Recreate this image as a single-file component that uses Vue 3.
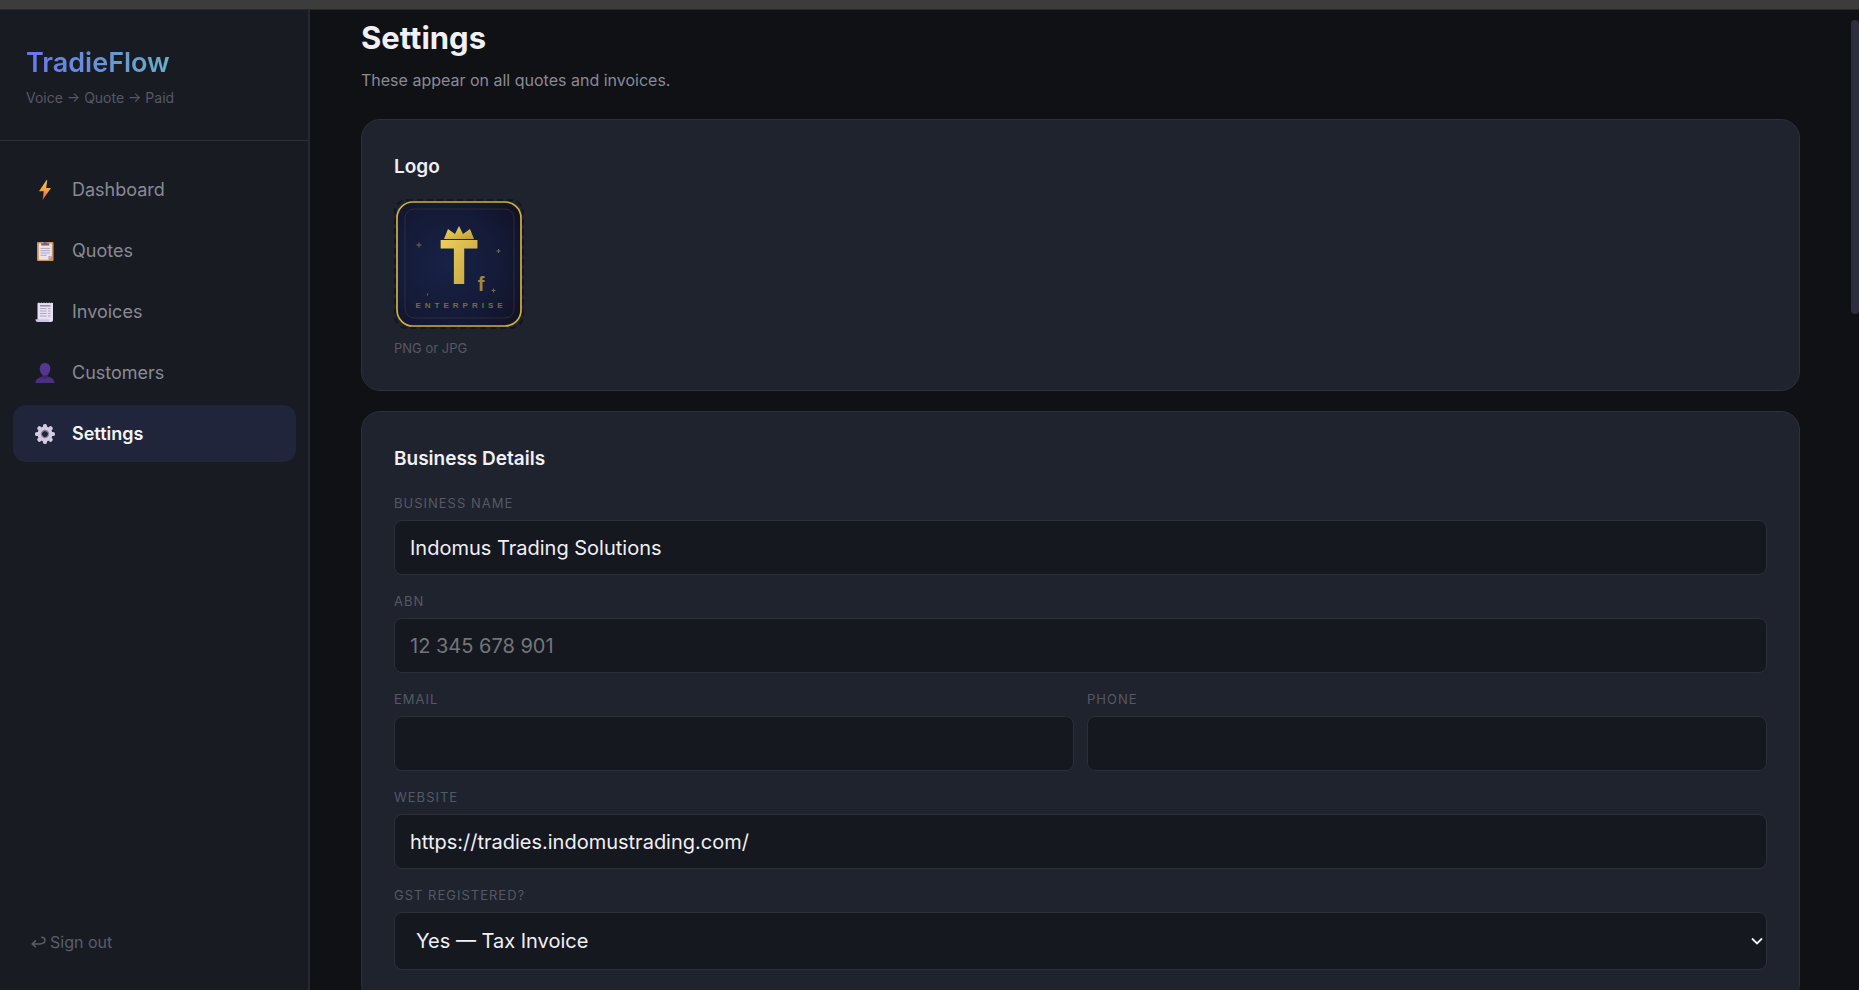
<template>
  <div class="app">
    <div class="window-strip"></div>
    <div class="shell">
      <aside class="sidebar">
        <div class="brand">
          <div class="brand-name">TradieFlow</div>
          <p class="brand-tag">Voice → Quote → Paid</p>
        </div>

        <nav class="nav">
          <a
            v-for="item in navItems"
            :key="item.id"
            :href="'#' + item.id"
            class="nav-item"
            :class="{ active: page === item.id }"
            @click.prevent="page = item.id"
          >
            <svg v-if="item.id === 'dashboard'" class="nav-icon" viewBox="0 0 20 20" aria-hidden="true">
              <defs>
                <linearGradient id="bolt" x1="0" y1="0" x2="0" y2="1">
                  <stop offset="0" stop-color="#fbc34e" />
                  <stop offset="0.55" stop-color="#f79a4b" />
                  <stop offset="1" stop-color="#e2485a" />
                </linearGradient>
              </defs>
              <path d="M11.6 0 4 11.200h4.800L7.600 20l8.400-12h-4.800L12.200 0Z" fill="url(#bolt)" />
            </svg>
            <svg v-else-if="item.id === 'quotes'" class="nav-icon" viewBox="0 0 20 20" aria-hidden="true">
              <rect x="2" y="1" width="16.500" height="19" rx="1" fill="#d0935a" />
              <path d="M3.800 2.500h13V15l-3.500 3.700H3.800Z" fill="#e9e4f3" />
              <path d="m16.800 15-3.500 3.700V15Z" fill="#b8a9cf" />
              <path d="M6.200 4.600V2.200h2.200a1.900 1.900 0 0 1 3.600 0h2.200v2.400Z" fill="#6d6480" />
              <path d="M5.500 7.400h9.500M5.500 9.700h9.500M5.500 12h9.500M5.500 14.300h6" stroke="#a79fb8" stroke-width="0.900" />
            </svg>
            <svg v-else-if="item.id === 'invoices'" class="nav-icon" viewBox="0 0 20 20" aria-hidden="true">
              <path d="M2.500 1.200 3.800.4l1.300.8 1.300-.8 1.300.8L9 .4l1.300.8 1.300-.8 1.300.8 1.300-.8 1.300.8 1.300-.8 1.200.8V18a2 2 0 0 1-2 2H5l-2.500-3Z" fill="#e6e0f0" />
              <path d="M.500 17.200H14c0 1.500.8 2.800 2.500 2.800H3a2.500 2.500 0 0 1-2.500-2.800Z" fill="#cfc5e4" />
              <path d="M5 3.800h10.500" stroke="#7d7492" stroke-width="1.200" />
              <path d="M5 6.500h6.500M5 9h6.500M5 11.500h6.500M5 14h6.500M13 6.500h2.500M13 9h2.500M13 11.500h2.500M13 14h2.500" stroke="#aba2bd" stroke-width="0.900" />
            </svg>
            <svg v-else-if="item.id === 'customers'" class="nav-icon" viewBox="0 0 20 20" aria-hidden="true">
              <path d="M.5 20c0-4 3.500-5.500 6.300-6.300h6.400c2.800.8 6.300 2.300 6.300 6.300Z" fill="#4a2f84" />
              <path d="M7.400 11h5.200v2.800a2.600 2 0 0 1-5.200 0Z" fill="#3d266f" />
              <path d="M10 0c3.300 0 5.200 2.200 5.200 5.600 0 4-2.200 7-5.200 7s-5.200-3-5.200-7C4.800 2.200 6.700 0 10 0Z" fill="#54388f" />
            </svg>
            <svg v-else class="nav-icon" viewBox="0 0 20 20" aria-hidden="true">
              <g fill="#d3cbe2">
                <rect v-for="n in 8" :key="n" x="7.900" y="0" width="4.200" height="6" rx="1.900" :transform="`rotate(${(n - 1) * 45} 10 10)`" />
              </g>
              <circle cx="10" cy="10" r="5.300" fill="none" stroke="#d3cbe2" stroke-width="4.400" />
              <circle cx="10" cy="10" r="3.600" fill="none" stroke="#8d839f" stroke-width="1.200" />
            </svg>
            <span>{{ item.label }}</span>
          </a>
        </nav>

        <button type="button" class="sign-out">
          <svg viewBox="0 0 14 12" aria-hidden="true">
            <path d="M9.500 1.200c2.300 0 3.500 1.100 3.500 2.700 0 2.200-2.200 3.400-5 3.400H1.500M4.500 4 1.200 7.300l3.300 3.200" />
          </svg>
          Sign out
        </button>
      </aside>

      <main class="content">
        <header class="page-head">
          <h1>Settings</h1>
          <p>These appear on all quotes and invoices.</p>
        </header>

        <section class="card">
          <h2>Logo</h2>
          <button type="button" class="logo-box" aria-label="Change logo">
            <svg viewBox="0 0 126 126" aria-hidden="true">
              <defs>
                <radialGradient id="night" cx="0.4" cy="0.5" r="0.750">
                  <stop offset="0" stop-color="#182246" />
                  <stop offset="0.6" stop-color="#141a36" />
                  <stop offset="1" stop-color="#101124" />
                </radialGradient>
                <linearGradient id="gold" x1="0" y1="0" x2="1" y2="1">
                  <stop offset="0" stop-color="#efd767" />
                  <stop offset="1" stop-color="#c29d35" />
                </linearGradient>
              </defs>
              <rect x="1" y="1" width="124" height="124" rx="16" fill="url(#night)" stroke="#cfae42" stroke-width="1.700" />
              <rect x="9" y="8" width="109" height="109" rx="9" fill="none" stroke="#34343c" stroke-width="0.800" />
              <path d="m48 38 4-10 7 5 4-8 4 8 7-5 4 10Z" fill="url(#gold)" />
              <text x="63" y="83" class="mark-t" fill="url(#gold)">T</text>
              <text x="85" y="90" class="mark-f">f</text>
              <text x="65" y="107" class="mark-word">ENTERPRISE</text>
              <path d="M23 41.500v5M20.500 44h5M102.500 48v4M100.500 50h4M97.500 87.500v4M95.500 89.500h4M31.500 92.500v2" stroke="#746b4d" stroke-width="1" />
            </svg>
          </button>
          <p class="hint">PNG or JPG</p>
        </section>

        <section class="card">
          <h2>Business Details</h2>
          <form class="fields" @submit.prevent>
            <div v-for="field in fields" :key="field.id" class="field" :class="{ half: field.half }">
              <label :for="field.id">{{ field.label }}</label>
              <input :id="field.id" v-model="form[field.id]" :type="field.type" :placeholder="field.placeholder" />
            </div>
            <div class="field">
              <label for="gst">GST Registered?</label>
              <div class="select-wrap">
                <select id="gst" v-model="form.gst">
                  <option value="yes">Yes — Tax Invoice</option>
                  <option value="no">No — Invoice</option>
                </select>
                <svg viewBox="0 0 12 8" aria-hidden="true"><path d="m1 1.500 5 5 5-5" /></svg>
              </div>
            </div>
          </form>
        </section>
        <div class="scroll-thumb"></div>
      </main>
    </div>
  </div>
</template>

<script setup>
import { reactive, ref } from 'vue'

const page = ref('settings')

const navItems = [
  { id: 'dashboard', label: 'Dashboard' },
  { id: 'quotes', label: 'Quotes' },
  { id: 'invoices', label: 'Invoices' },
  { id: 'customers', label: 'Customers' },
  { id: 'settings', label: 'Settings' }
]

const fields = [
  { id: 'name', label: 'Business Name', type: 'text' },
  { id: 'abn', label: 'ABN', type: 'text', placeholder: '12 345 678 901' },
  { id: 'email', label: 'Email', type: 'email', half: true },
  { id: 'phone', label: 'Phone', type: 'tel', half: true },
  { id: 'website', label: 'Website', type: 'url' }
]

const form = reactive({
  name: 'Indomus Trading Solutions',
  abn: '',
  email: '',
  phone: '',
  website: 'https://tradies.indomustrading.com/',
  gst: 'yes'
})
</script>

<style>
body { background: #101115; }
</style>

<style scoped>
.app, .app * { box-sizing: border-box; }
.app {
  height: 100vh; display: flex; flex-direction: column; overflow: hidden;
  background: #101115; color: #f0f0f5;
  font-family: Inter, "Open Sans", sans-serif;
}
h1, h2, p { margin: 0; }
button, input, select { font-family: inherit; }

.window-strip { flex: none; height: 10px; background: #3c3c3c; border-bottom: 1px solid #2a2a2b; }
.shell { flex: 1; min-height: 0; display: flex; }

/* Sidebar */
.sidebar {
  flex: none; width: 310px; display: flex; flex-direction: column;
  background: #191b23; border-right: 2px solid #262833;
}
.brand { padding: 35px 26px 32px; border-bottom: 1px solid #2c2e3a; }
.brand-name {
  width: fit-content; font-size: 27px; line-height: 36px; font-weight: 600;
  background: linear-gradient(90deg, #6877ee, #68adc6);
  -webkit-background-clip: text; background-clip: text; color: transparent;
}
.brand-tag { margin-top: 7px; font-size: 14px; line-height: 20px; color: #565866; }
.nav { flex: 1; display: flex; flex-direction: column; gap: 4px; padding: 20px 12px 0 13px; }
.nav-item {
  display: flex; align-items: center; gap: 17px; height: 57px; padding: 0 22px;
  border-radius: 13px; color: #888a95; font-size: 18px; text-decoration: none;
}
.nav-item.active { background: #21253b; color: #f4f4f8; font-weight: 600; }
.nav-icon { width: 20px; height: 20px; }
.sign-out {
  display: flex; align-items: center; gap: 4px; margin: 0 0 30px; padding: 4px 31px;
  border: 0; background: none; color: #5b5d6c; font-size: 16px; line-height: 28px; cursor: pointer;
}
.sign-out svg { width: 15px; height: 13px; fill: none; stroke: currentColor; stroke-width: 1.400; }

/* Page */
.content { position: relative; flex: 1; min-width: 0; padding: 6px 59px 51px 51px; overflow: hidden; }
.page-head { margin-bottom: 25px; }
h1 { font-size: 31px; line-height: 44px; font-weight: 700; }
.page-head p { margin-top: 6px; font-size: 16px; line-height: 28px; color: #888a95; }
.card {
  margin-bottom: 20px; padding: 32px; border: 1px solid #2c2f3c;
  border-radius: 19px; background: #1f232e;
}
h2 { font-size: 19px; line-height: 30px; font-weight: 600; }
.logo-box {
  display: block; width: 130px; height: 130px; margin-top: 17px; padding: 0;
  border: 2px dashed #14161d; border-radius: 13px; background: none; cursor: pointer;
}
.logo-box svg { display: block; width: 100%; height: 100%; }
.mark-t { font-size: 60px; font-weight: 800; text-anchor: middle; }
.mark-f { font: 700 20px "Liberation Sans", sans-serif; text-anchor: middle; fill: #9d8741; }
.mark-word { font: 700 8px "Liberation Sans", sans-serif; letter-spacing: 4px; text-anchor: middle; fill: #786b43; }
.hint { margin-top: 9px; font-size: 13px; line-height: 20px; color: #565866; }

.fields { display: grid; grid-template-columns: 1fr 1fr; column-gap: 13px; row-gap: 16px; margin-top: 19px; }
.field { grid-column: 1 / -1; display: flex; flex-direction: column; gap: 6px; }
.field.half { grid-column: auto; }
label { font-size: 13px; line-height: 21px; letter-spacing: 1px; text-transform: uppercase; color: #565866; }
input, select {
  width: 100%; height: 55px; padding: 0 15px; border: 1px solid #2c2e3a; border-radius: 8px;
  outline: none; background: #161820; color: #f0f0f5; font-size: 20px;
}
.select-wrap { position: relative; display: flex; align-items: center; }
.select-wrap svg {
  position: absolute; right: 4px; width: 12px; height: 8px; pointer-events: none;
  fill: none; stroke: #f0f0f5; stroke-width: 1.800;
}
select { height: 58px; padding: 0 24px 0 21px; appearance: none; }
input::placeholder { color: #74757a; }

.scroll-thumb {
  position: absolute; top: 10px; right: 0; width: 8px; height: 30%;
  border-radius: 4px; background: #2c2e3d;
}
</style>
